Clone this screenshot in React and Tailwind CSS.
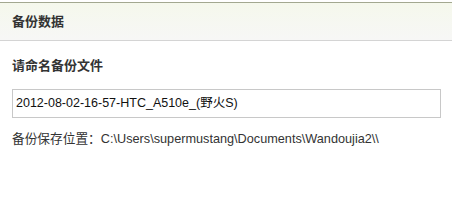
export default function App() {
  return (
    <div
      className="w-[452px] h-[215px] bg-white overflow-hidden text-[#222]"
      style={{ fontFamily: "Arial, 'Liberation Sans', 'Noto Sans CJK SC', sans-serif" }}
    >
      {/* header */}
      <div className="mt-[2px] h-[39px] border-t border-[#a3a890] border-b border-b-[#d4d4d4] bg-gradient-to-b from-[#f5f8ec] to-[#f7f7f6] flex items-center pl-[12px]">
        <span className="text-[13px] font-bold text-[#333] mt-[1px]">备份数据</span>
      </div>

      <div className="px-[12px] pr-[11px]">
        <div className="mt-[17px] text-[13px] font-bold text-[#333] leading-[16px]">请命名备份文件</div>
        <div className="mt-[15px] h-[29px] border border-[#c8c8c8] flex items-center pl-[3px] text-[12.5px] text-[#111]">
          2012-08-02-16-57-HTC_A510e_(野火S)
        </div>
        <div className="mt-[13px] text-[12.7px] text-[#333] leading-[16px]">
          备份保存位置：C:\Users\supermustang\Documents\Wandoujia2\\
        </div>
      </div>
    </div>
  );
}
